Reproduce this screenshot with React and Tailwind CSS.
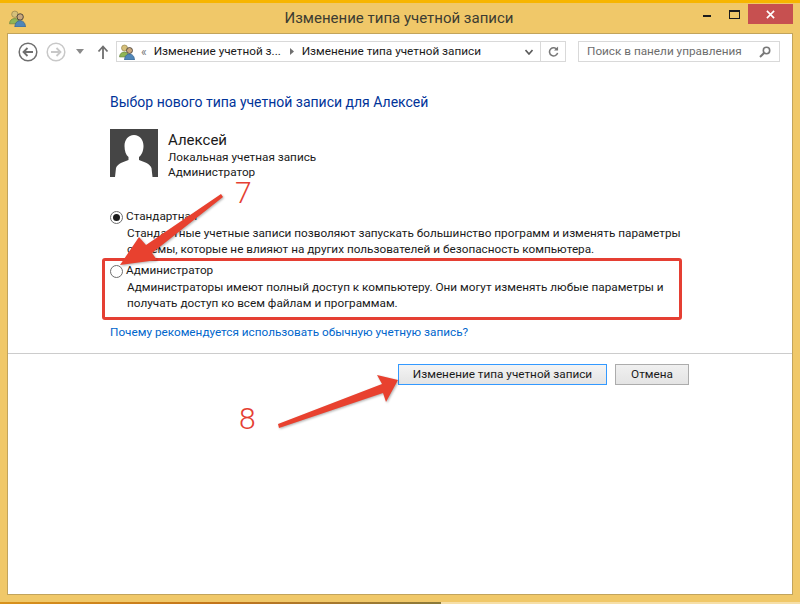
import React from 'react';

const font = { fontFamily: 'Roboto, "Noto Sans", sans-serif' };

const UsersIcon = ({ className }) => (
  <svg viewBox="0 0 16 16" className={className}>
    <circle cx="5.5" cy="4" r="3" fill="#d6c07a" stroke="#8a7a45" strokeWidth="0.6" />
    <path d="M0.5 13c0-3 2-5 5-5s4 2 4 5z" fill="#8fb556" stroke="#64803c" strokeWidth="0.6" />
    <circle cx="10.5" cy="6.5" r="3" fill="#c9a77c" stroke="#3f3a33" strokeWidth="0.8" />
    <path d="M5.5 16c0-3.5 2-6 5-6s5 2.5 5 6z" fill="#4f86b8" stroke="#2f5a85" strokeWidth="0.6" />
  </svg>
);

const NavCircle = ({ color, dir }) => (
  <svg viewBox="0 0 20 20" className="w-5 h-5">
    <circle cx="10" cy="10" r="8.8" fill="white" stroke={color} strokeWidth="1.5" />
    <path
      d={dir === 'left' ? 'M15 10H6M9.5 6L5.5 10L9.5 14' : 'M5 10H14M10.5 6L14.5 10L10.5 14'}
      fill="none"
      stroke={color}
      strokeWidth="1.8"
    />
  </svg>
);

const Radio = ({ checked }) => (
  <span className="w-[13px] h-[13px] rounded-full border border-[#6e6e6e] bg-white flex items-center justify-center shrink-0">
    {checked && <span className="w-[7px] h-[7px] rounded-full bg-[#1c1c1c]" />}
  </span>
);

const App = () => {
  return (
    <div style={font} className="w-[800px] h-[604px] overflow-hidden relative flex flex-col bg-[#f0c869] text-[11.75px] text-[#1a1a1a]">
      <div className="h-[3px] bg-[#f7b500] shrink-0" />

      {/* Заголовок окна */}
      <div className="h-[30px] shrink-0 flex items-center pl-[9px]">
        <UsersIcon className="w-[17px] h-[17px]" />
        <div className="flex-1 text-center text-[15px] text-[#3c3c32] pl-[78px]">Изменение типа учетной записи</div>
        <div className="flex items-start self-start mt-[1px]">
          <div className="w-[26px] h-[20px] flex items-center justify-center">
            <span className="w-[8px] h-[2px] bg-[#1c1c1c] mt-[3px]" />
          </div>
          <div className="w-[28px] h-[20px] flex items-center justify-center">
            <span className="w-[11px] h-[9px] border border-[#1c1c1c] border-t-2" />
          </div>
          <div className="w-[45px] h-[20px] mr-[7px] bg-[#c75050] flex items-center justify-center">
            <svg viewBox="0 0 10 10" className="w-[9px] h-[9px]">
              <path d="M1 1L9 9M9 1L1 9" stroke="white" strokeWidth="1.8" />
            </svg>
          </div>
        </div>
      </div>

      {/* Окно */}
      <div className="mx-[7px] h-[562px] shrink-0 border border-[#c2a45c] bg-white flex flex-col">
        <div className="h-[31px] shrink-0 flex items-center pl-[10px] pt-[4px]">
          <NavCircle color="#6f6f6f" dir="left" />
          <div className="w-[8px]" />
          <NavCircle color="#c8c8c8" dir="right" />
          <svg viewBox="0 0 8 5" className="w-[8px] h-[5px] ml-[10px]">
            <path d="M0 0H8L4 5z" fill="#8a8a8a" />
          </svg>
          <svg viewBox="0 0 12 14" className="w-[12px] h-[14px] ml-[13px]">
            <path d="M6 14V2M1.5 6.5L6 1.5L10.5 6.500" fill="none" stroke="#6f6f6f" strokeWidth="1.8" />
          </svg>
          <div className="ml-[7px] w-[450px] h-[21px] border border-[#d9d9d9] flex items-center pl-[2px]">
            <UsersIcon className="w-[16px] h-[16px]" />
            <span className="ml-[6px] text-[#777] text-[12px] leading-none">«</span>
            <span className="ml-[7px] w-[128px] whitespace-nowrap">Изменение учетной з...</span>
            <svg viewBox="0 0 4 7" className="w-[4px] h-[7px] ml-[8px] shrink-0">
              <path d="M0 0L4 3.5L0 7z" fill="#6f6f6f" />
            </svg>
            <span className="ml-[8px] whitespace-nowrap">Изменение типа учетной записи</span>
            <svg viewBox="0 0 8 6" className="w-[8px] h-[6px] ml-auto mr-[7px]">
              <path d="M0.5 1L4 5L7.5 1" fill="none" stroke="#5a5a5a" strokeWidth="1.6" />
            </svg>
            <div className="w-[25px] h-full border-l border-[#d9d9d9] flex items-center justify-center">
              <svg viewBox="0 0 12 12" className="w-[11px] h-[11px]">
                <path d="M10 4A4.5 4.5 0 1 0 10.5 7.5" fill="none" stroke="#777" strokeWidth="1.7" />
                <path d="M11 0.5V5H6.5z" fill="#777" />
              </svg>
            </div>
          </div>
          <div className="ml-[12px] w-[202px] h-[21px] border border-[#d9d9d9] flex items-center pl-[8px] pr-[8px] justify-between">
            <span className="text-[#6d6d6d] whitespace-nowrap">Поиск в панели управления</span>
            <svg viewBox="0 0 12 12" className="w-[12px] h-[12px]">
              <circle cx="7.5" cy="4.5" r="3.2" fill="none" stroke="#777" strokeWidth="1.6" />
              <path d="M5 7L1 11" stroke="#777" strokeWidth="2" />
            </svg>
          </div>
        </div>

        <div className="pl-[102px] pt-[27px] shrink-0">
          <h1 className="text-[14px] leading-[20px] text-[#003399]">Выбор нового типа учетной записи для Алексей</h1>

          <div className="flex mt-[17px]">
            <div className="w-[48px] h-[48px] bg-[#454545] overflow-hidden">
              <svg viewBox="0 0 48 48" className="w-full h-full">
                <path d="M24 6c6 0 9.500 5 9.500 11 0 5-2 9-4.500 11v3c5 2 11 3.500 12.500 8l1 9H5l1-9c1.500-4.500 7.500-6 12.500-8v-3C16 26 14.500 22 14.500 17 14.500 11 18 6 24 6z" fill="white" />
              </svg>
            </div>
            <div className="ml-[10px]">
              <div className="text-[15px] leading-[20px] mt-[1px]">Алексей</div>
              <div className="leading-[15px]">Локальная учетная запись</div>
              <div className="leading-[15px]">Администратор</div>
            </div>
          </div>

          <div className="mt-[29px] flex items-center gap-[3px] h-[16px]">
            <Radio checked />
            <span>Стандартная</span>
          </div>
          <div className="pl-[17px] leading-[16px] whitespace-nowrap">
            <div>Стандартные учетные записи позволяют запускать большинство программ и изменять параметры</div>
            <div>системы, которые не влияют на других пользователей и безопасность компьютера.</div>
          </div>

          <div className="mt-[6px] flex items-center gap-[3px] h-[16px]">
            <Radio />
            <span>Администратор</span>
          </div>
          <div className="pl-[17px] leading-[16px] whitespace-nowrap">
            <div>Администраторы имеют полный доступ к компьютеру. Они могут изменять любые параметры и</div>
            <div>получать доступ ко всем файлам и программам.</div>
          </div>

          <div className="mt-[13px] leading-[16px] text-[#0066cc]">Почему рекомендуется использовать обычную учетную запись?</div>
        </div>

        <div className="mt-[13px] border-t border-[#cccccc] shrink-0 flex justify-end gap-[8px] pt-[10px] pr-[103px]">
          <button className="w-[209px] h-[21px] border border-[#3399ff] bg-gradient-to-b from-[#f4f4f4] to-[#e4e4e4]">
            Изменение типа учетной записи
          </button>
          <button className="w-[74px] h-[21px] border border-[#acacac] bg-gradient-to-b from-[#f0f0f0] to-[#e4e4e4]">
            Отмена
          </button>
        </div>
      </div>

      {/* Нижняя полоса — фон рабочего стола */}
      <div className="mt-auto h-[2px] flex shrink-0">
        <div className="w-[441px] bg-gradient-to-r from-[#d8921c] via-[#c2741a] to-[#8a7a3a]" />
        <div className="flex-1 bg-[#f6dfa8]" />
      </div>

      {/* Пометки поверх скриншота */}
      <div className="absolute left-[102px] top-[258px] w-[580px] h-[62px] border-[3px] border-[#e53f33] rounded-[3px]" />
      <svg viewBox="0 0 800 604" className="absolute inset-0 w-[800px] h-[604px] pointer-events-none drop-shadow-[1px_1px_1px_rgba(0,0,0,0.3)]">
        <path d="M221 194L223 197L152 253L157 260L120 265L139 237L146 245z" fill="#e8412f" />
        <path d="M278 424L382 384L377 375L398 380L386 402L383 393L279 428z" fill="#e8412f" />
      </svg>
      <span className="absolute left-[235px] top-[182px] text-[30px] leading-[22px] font-light text-[#e53f33]">7</span>
      <span className="absolute left-[239px] top-[408px] text-[30px] leading-[22px] font-light text-[#e53f33]">8</span>
    </div>
  );
};

export default App;
